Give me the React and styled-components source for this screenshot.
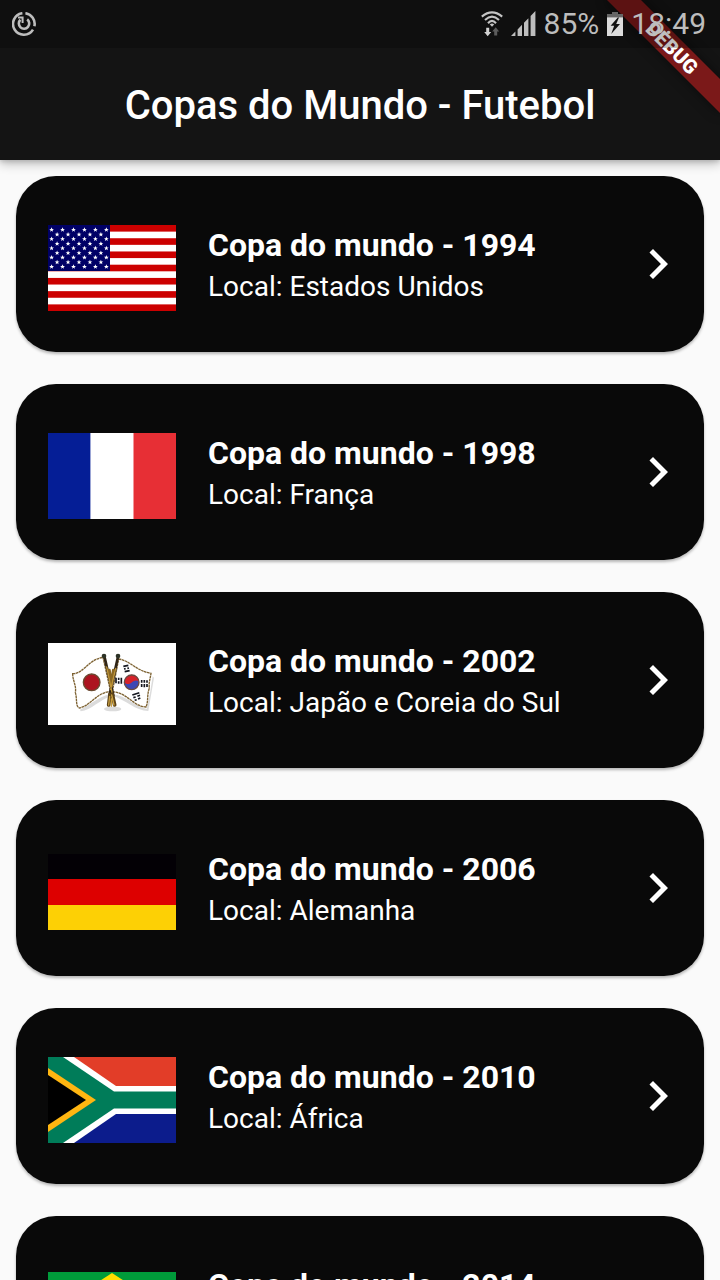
import React from "react";
import styled, { createGlobalStyle } from "styled-components";

const GlobalStyle = createGlobalStyle`
  *, *::before, *::after { box-sizing: border-box; }
  body {
    margin: 0;
    background: #fafafa;
    font-family: Roboto, "Liberation Sans", sans-serif;
  }
`;

const Screen = styled.div`
  position: relative;
  display: flex;
  flex-direction: column;
  height: 100vh;
  overflow: hidden;
  background: #fafafa;
`;

const Header = styled.header`
  position: relative;
  z-index: 1;
  flex: none;
  background: #141414;
  box-shadow: 0 4px 10px rgba(0, 0, 0, 0.24), 0 2px 4px rgba(0, 0, 0, 0.12);
`;

const StatusBar = styled.div`
  position: relative;
  z-index: 2;
  display: flex;
  align-items: center;
  justify-content: space-between;
  height: 48px;
  padding: 0 14px 0 12px;
  background: rgba(0, 0, 0, 0.25);
  color: #bdbdbd;
  font-size: 30px;
  line-height: 48px;
`;

const StatusGroup = styled.div`
  display: flex;
  align-items: center;
  gap: 8px;
`;

const StatusText = styled.span`
  display: block;
  height: 48px;
`;

const StatusIcon = styled.svg`
  display: block;
  flex: none;
`;

const TitleBar = styled.div`
  display: flex;
  align-items: center;
  justify-content: center;
  height: 112px;
  padding: 4px 32px 0;
`;

const Title = styled.h1`
  margin: 0;
  color: #fff;
  font-size: 40px;
  font-weight: 500;
  line-height: 48px;
`;

const BannerCorner = styled.div`
  position: absolute;
  top: 0;
  right: 0;
  width: 160px;
  height: 160px;
  overflow: hidden;
  pointer-events: none;
`;

const Banner = styled.div`
  position: absolute;
  top: 36px;
  right: -32px;
  width: 160px;
  height: 24px;
  transform: rotate(45deg);
  background: rgba(183, 28, 28, 0.63);
  box-shadow: 0 0 12px rgba(0, 0, 0, 0.5);
  color: #fff;
  font-size: 20px;
  font-weight: 900;
  line-height: 24px;
  text-align: center;
`;

const CupList = styled.ul`
  flex: 1;
  min-height: 0;
  margin: 0;
  padding: 16px;
  list-style: none;
  overflow-y: auto;
  scrollbar-width: none;
`;

const CupItem = styled.li`
  & + & {
    margin-top: 32px;
  }
`;

const CupCard = styled.button`
  display: flex;
  align-items: center;
  gap: 32px;
  width: 100%;
  min-height: 176px;
  padding: 16px 16px 16px 32px;
  border: 0;
  border-radius: 40px;
  background: #090909;
  box-shadow: 0 2px 3px rgba(0, 0, 0, 0.28);
  color: #fff;
  font-family: inherit;
  text-align: left;
  cursor: pointer;
`;

const FlagSlot = styled.span`
  display: block;
  flex: none;
  width: 128px;
  padding-top: 8px;
`;

const FlagSvg = styled.svg`
  display: block;
  width: 100%;
`;

const CupText = styled.span`
  display: flex;
  flex: 1;
  flex-direction: column;
  min-width: 0;
  padding-top: 4px;
  line-height: 42px;
`;

const CupName = styled.span`
  font-size: 32px;
  font-weight: 700;
`;

const CupPlace = styled.span`
  font-size: 28px;
`;

const Chevron = styled.svg`
  display: block;
  flex: none;
  width: 60px;
  height: 60px;
  fill: #fff;
`;

const STAR = "0,-2.5 .7,-.8 2.4,-.8 1,.3 1.5,2 0,1 -1.5,2 -1,.3 -2.4,-.8 -.7,-.8";

function UsaFlag() {
  const stars = [];
  for (let row = 0; row < 9; row++) {
    const odd = row % 2;
    for (let col = 0; col < (odd ? 5 : 6); col++) {
      stars.push([3.6 + odd * 5.5 + col * 10.95, 4.8 + row * 4.63]);
    }
  }
  const stripe = 86 / 13;
  return (
    <FlagSvg viewBox="0 0 128 86" aria-hidden="true">
      <rect width="128" height="86" fill="#fff" />
      {[0, 2, 4, 6, 8, 10, 12].map((i) => (
        <rect key={i} y={i * stripe} width="128" height={stripe} fill="#cc0000" />
      ))}
      <rect width="62" height="46" fill="#000066" />
      {stars.map(([x, y]) => (
        <polygon key={`${x}-${y}`} points={STAR} fill="#fff" transform={`translate(${x} ${y})`} />
      ))}
    </FlagSvg>
  );
}

function FranceFlag() {
  return (
    <FlagSvg viewBox="0 0 128 86" aria-hidden="true">
      <rect width="128" height="86" fill="#fff" />
      <rect width="42.4" height="86" fill="#051e96" />
      <rect x="85.5" width="42.5" height="86" fill="#e72f35" />
    </FlagSvg>
  );
}

function JapanKoreaFlag() {
  return (
    <FlagSvg viewBox="0 0 384 246" aria-hidden="true">
      <rect width="384" height="246" fill="#fff" />
      <g fill="#dcdcdc">
        <path d="M96 200C125 188 150 160 188 154L190 160C155 170 130 202 98 205Z" />
        <path d="M196 154C235 158 260 190 296 198L306 150L314 100L318 104L301 204C262 204 232 170 196 160Z" />
        <ellipse cx="194" cy="198" rx="26" ry="7" />
      </g>
      <g fill="#fff" stroke="#7d6232" strokeWidth="4" strokeDasharray="8 1.5">
        <path d="M74 92C105 94 120 50 165 43L188 146C148 146 126 190 94 195C82 190 88 168 82 148C86 128 74 114 74 92Z" />
        <path d="M212 48C245 52 265 84 309 91C306 110 302 118 304 136C296 156 302 174 294 192C255 190 240 150 193 146Z" />
      </g>
      <circle cx="131" cy="118" r="25" fill="#ad1420" stroke="#6b4a32" strokeWidth="4" />
      <circle cx="251" cy="118" r="22" fill="#3c47b4" />
      <path d="M229 118A22 22 0 0 1 273 116C266 110 258 113 252 118C245 125 234 125 229 118Z" fill="#d6222a" />
      <circle cx="251" cy="118" r="22" fill="none" stroke="#6b4a42" strokeWidth="4" />
      <g stroke="#14161e" strokeWidth="5">
        <path d="M226 70L241 67M228 78L233 77M238 76L243 75M230 86L245 83" />
        <path d="M204 104L204 121M212 104L212 111M212 115L212 122M220 104L220 122" />
        <path d="M281 111L281 119M281 123L281 132M289 111L289 119M289 123L289 133M297 112L297 119M297 123L297 132" />
        <path d="M253 156L274 149M256 164L263 162M268 160L276 157M260 172L266 170M270 168L277 165" />
      </g>
      <g fill="none" strokeLinecap="round">
        <path d="M170 44L196 158M209 46L184 158" stroke="#2f2417" strokeWidth="8" />
        <path d="M184 82L190 128M196 82L190 128" stroke="#8a6723" strokeWidth="9" />
        <path d="M176 72L192 148M203 76L188 140" stroke="#c09638" strokeWidth="4" />
        <path d="M193 154L200 186M186 154L182 186" stroke="#5c4217" strokeWidth="11" />
        <path d="M191 156L198 186M185 160L182 186M190 168L190 190" stroke="#c9a142" strokeWidth="4" />
      </g>
      <g fill="#2c3226">
        <circle cx="168" cy="39" r="7" />
        <circle cx="210" cy="39" r="7" />
      </g>
    </FlagSvg>
  );
}

function GermanyFlag() {
  return (
    <FlagSvg viewBox="0 0 128 76" aria-hidden="true">
      <rect width="128" height="25" fill="#030005" />
      <rect y="25" width="128" height="26" fill="#dd0000" />
      <rect y="51" width="128" height="25" fill="#fdd005" />
    </FlagSvg>
  );
}

function SouthAfricaFlag() {
  return (
    <FlagSvg viewBox="0 0 128 86" aria-hidden="true">
      <rect width="128" height="86" fill="#007c59" />
      <path d="M15 0H128V34.5H66Z" fill="#fff" />
      <path d="M26 0H128V29H68Z" fill="#e23d28" />
      <path d="M15 86H128V51.5H66Z" fill="#fff" />
      <path d="M26 86H128V57H68Z" fill="#0c1c8c" />
      <path d="M0 11L48 43L0 75Z" fill="#ffb611" />
      <path d="M0 18L38 43L0 68Z" fill="#000" />
    </FlagSvg>
  );
}

function BrazilFlag() {
  return (
    <FlagSvg viewBox="0 0 128 72" aria-hidden="true">
      <rect width="128" height="72" fill="#009b3a" />
      <path d="M64 1L118 36L64 71L10 36Z" fill="#fedf00" />
      <circle cx="64" cy="36" r="17" fill="#002776" />
      <path d="M48 32Q66 30 80 43" fill="none" stroke="#fff" strokeWidth="3" />
    </FlagSvg>
  );
}

const cups = [
  { year: 1994, place: "Estados Unidos", Flag: UsaFlag },
  { year: 1998, place: "França", Flag: FranceFlag },
  { year: 2002, place: "Japão e Coreia do Sul", Flag: JapanKoreaFlag },
  { year: 2006, place: "Alemanha", Flag: GermanyFlag },
  { year: 2010, place: "África", Flag: SouthAfricaFlag },
  { year: 2014, place: "Brasil", Flag: BrazilFlag },
];

function SyncIcon() {
  return (
    <StatusIcon width="24" height="24" viewBox="0 0 24 24" fill="none" stroke="#bdbdbd" strokeWidth="2.6" aria-hidden="true">
      <path d="M13.4 1.2A10.8 10.8 0 0 1 22.4 14.2" />
      <path d="M21 17.6A10.8 10.8 0 1 1 10.4 1.2" />
      <path d="M15.2 7.4A5.2 5.2 0 1 1 8.4 7.8" />
      <path d="M6 5.6H10.6V11" strokeWidth="2" />
    </StatusIcon>
  );
}

function WifiIcon() {
  return (
    <StatusIcon width="22" height="26" viewBox="0 0 22 26" aria-hidden="true">
      <g fill="none" stroke="#c4c4c4" strokeWidth="2.1">
        <path d="M.8 5.6Q11 -2.8 21.2 5.6" />
        <path d="M4 9Q11 2.4 18 9" />
        <path d="M7 12.2Q11 7.6 15 12.2" />
      </g>
      <path d="M8.8 13.4Q11 11.8 13.2 13.4L11 15.8Z" fill="#c4c4c4" />
      <path d="M5.2 16.8H8.2V21H10.2L6.7 25.2L3.2 21H5.2Z" fill="#d2d2d2" />
      <path d="M13.2 24.4H16.2V20.4H18.2L14.7 16.2L11.2 20.4H13.2Z" fill="#5c5c5c" />
    </StatusIcon>
  );
}

function SignalIcon() {
  return (
    <StatusIcon width="25" height="26" viewBox="0 0 25 26" fill="#bdbdbd" aria-hidden="true">
      <path d="M0 25L4.4 20.6V25ZM6.6 18.4L11 13.8V25H6.6ZM13 11.8L17.4 7.2V25H13ZM19.6 5L24.4 0V25H19.6Z" />
    </StatusIcon>
  );
}

function BatteryIcon() {
  return (
    <StatusIcon width="16" height="24" viewBox="0 0 16 24" aria-hidden="true">
      <path d="M5 0H11V2H16V6H0V2H5Z" fill="#666" />
      <path d="M0 5.4H16V24H0Z" fill="#dcdcdc" />
      <path d="M10.8 5.4L3.6 13.8H7.2L4.2 22L13 12H9.2L12 5.4Z" fill="#111" />
    </StatusIcon>
  );
}

export default function App() {
  return (
    <Screen>
      <GlobalStyle />
      <Header>
        <StatusBar>
          <SyncIcon />
          <StatusGroup>
            <WifiIcon />
            <SignalIcon />
            <StatusText>85%</StatusText>
            <BatteryIcon />
            <StatusText>18:49</StatusText>
          </StatusGroup>
        </StatusBar>
        <TitleBar>
          <Title>Copas do Mundo - Futebol</Title>
        </TitleBar>
        <BannerCorner>
          <Banner>DEBUG</Banner>
        </BannerCorner>
      </Header>
      <CupList>
        {cups.map(({ year, place, Flag }) => (
          <CupItem key={year}>
            <CupCard type="button">
              <FlagSlot>
                <Flag />
              </FlagSlot>
              <CupText>
                <CupName>Copa do mundo - {year}</CupName>
                <CupPlace>Local: {place}</CupPlace>
              </CupText>
              <Chevron viewBox="0 0 24 24" aria-hidden="true">
                <path d="M10 6L8.59 7.41L13.17 12L8.59 16.59L10 18L16 12Z" />
              </Chevron>
            </CupCard>
          </CupItem>
        ))}
      </CupList>
    </Screen>
  );
}
